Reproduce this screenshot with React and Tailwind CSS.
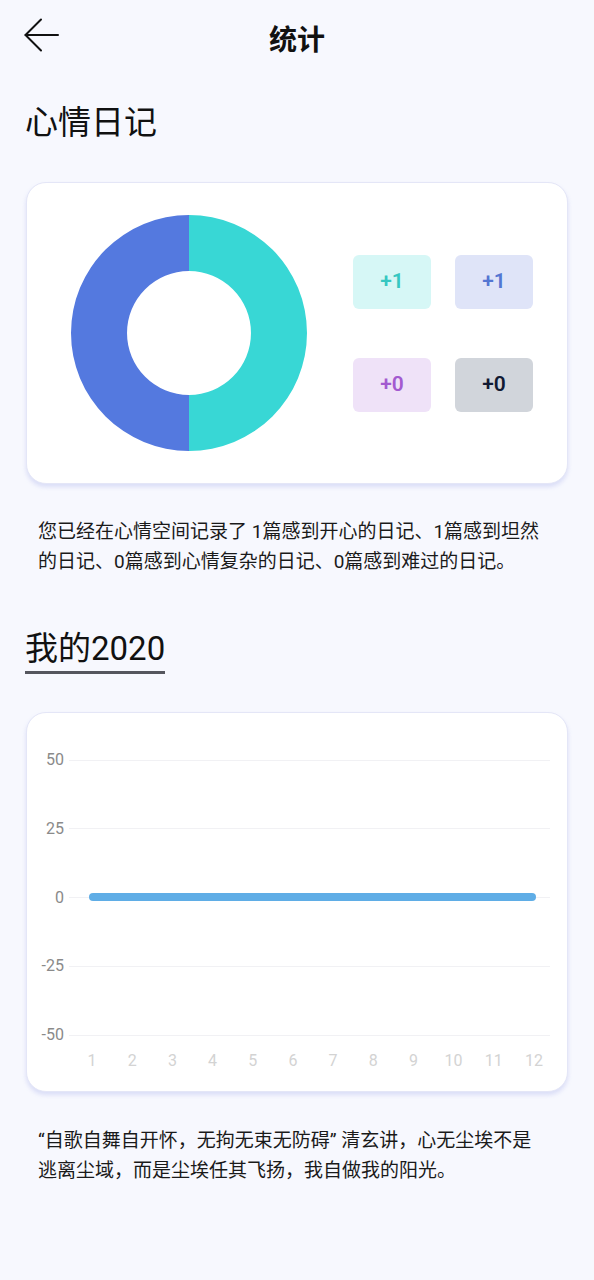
export default function App() {
  const font = { fontFamily: 'Roboto, "Noto Sans CJK SC", sans-serif' };
  const boxes = [
    { label: '+1', bg: 'bg-[#d6f7f6]', text: 'text-[#36c7c1]' },
    { label: '+1', bg: 'bg-[#dfe4f8]', text: 'text-[#5476d2]' },
    { label: '+0', bg: 'bg-[#efe2f8]', text: 'text-[#a35ad0]' },
    { label: '+0', bg: 'bg-[#d1d5db]', text: 'text-[#111a33]' },
  ];
  const yLabels = ['50', '25', '0', '-25', '-50'];
  const months = ['1', '2', '3', '4', '5', '6', '7', '8', '9', '10', '11', '12'];

  return (
    <div className="min-h-screen w-full bg-[#f7f8fe] text-[#111]" style={font}>
      {/* Header */}
      <div className="relative flex h-[82px] items-center justify-center">
        <button className="absolute left-[24px] top-[18px] text-[#111]">
          <svg width="36" height="34" viewBox="0 0 36 34" fill="none" stroke="currentColor" strokeWidth="2" strokeLinecap="round" strokeLinejoin="round">
            <path d="M1.5 17H34" />
            <path d="M17 1.5L1.5 17L17 32.5" />
          </svg>
        </button>
        <h1 className="text-[28px] font-bold leading-none">统计</h1>
      </div>

      {/* 心情日记 */}
      <h2 className="mt-[21px] pl-[25px] text-[33px] leading-[40px]">心情日记</h2>

      <div className="mx-[26px] mt-[39px] flex h-[302px] items-center rounded-[20px] border border-[#e4e6f7] bg-white pl-[44px] shadow-[0_3px_4px_rgba(185,190,240,0.45)]">
        <svg width="236" height="236" viewBox="0 0 236 236">
          <path d="M118 0 A118 118 0 0 1 118 236 L118 180 A62 62 0 0 0 118 56 Z" fill="#38d7d5" />
          <path d="M118 0 A118 118 0 0 0 118 236 L118 180 A62 62 0 0 1 118 56 Z" fill="#5479df" />
        </svg>
        <div className="ml-[46px] grid grid-cols-[78px_78px] gap-x-[24px] gap-y-[49px]">
          {boxes.map((b, i) => (
            <div key={i} className={`flex h-[54px] items-center justify-center rounded-[6px] ${b.bg}`}>
              <span className={`text-[21px] font-semibold ${b.text}`}>{b.label}</span>
            </div>
          ))}
        </div>
      </div>

      <p className="mt-[33px] pl-[38px] pr-[48px] text-[19px] leading-[30px] text-[#1a1a1a]">
        您已经在心情空间记录了 1篇感到开心的日记、1篇感到坦然的日记、0篇感到心情复杂的日记、0篇感到难过的日记。
      </p>

      {/* 我的2020 */}
      <div className="mt-[52px] pl-[25px]">
        <div className="inline-block">
          <h2 className="text-[33px] leading-[40px]">我的2020</h2>
          <div className="mt-[2px] h-[3px] w-full bg-[#55565e]" />
        </div>
      </div>

      <div className="relative mx-[26px] mt-[38px] rounded-[20px] border border-[#e4e6f7] bg-white pb-[20px] pt-[37px] shadow-[0_3px_4px_rgba(185,190,240,0.45)]">
        <div className="flex flex-col gap-[48.75px] pr-[17px]">
          {yLabels.map((l) => (
            <div key={l} className="flex h-[20px] items-center">
              <span className="w-[37px] text-right text-[16px] text-[#8a8a8a]">{l}</span>
              <div className="ml-[5px] h-px flex-1 bg-[#f1f1f4]" />
            </div>
          ))}
        </div>
        <div className="ml-[45px] mt-[6px] grid w-[482px] grid-cols-12">
          {months.map((m) => (
            <span key={m} className="text-center text-[16px] leading-[20px] text-[#d3d3d3]">{m}</span>
          ))}
        </div>
        {/* data line */}
        <div className="absolute left-[62px] top-[180px] h-[8px] w-[447px] rounded-full bg-[#5fade6]" />
      </div>

      <p className="mt-[34px] pb-[40px] pl-[38px] pr-[48px] text-[19px] leading-[30px] text-[#1a1a1a]">
        “自歌自舞自开怀，无拘无束无防碍” 清玄讲，心无尘埃不是逃离尘域，而是尘埃任其飞扬，我自做我的阳光。
      </p>
    </div>
  );
}
